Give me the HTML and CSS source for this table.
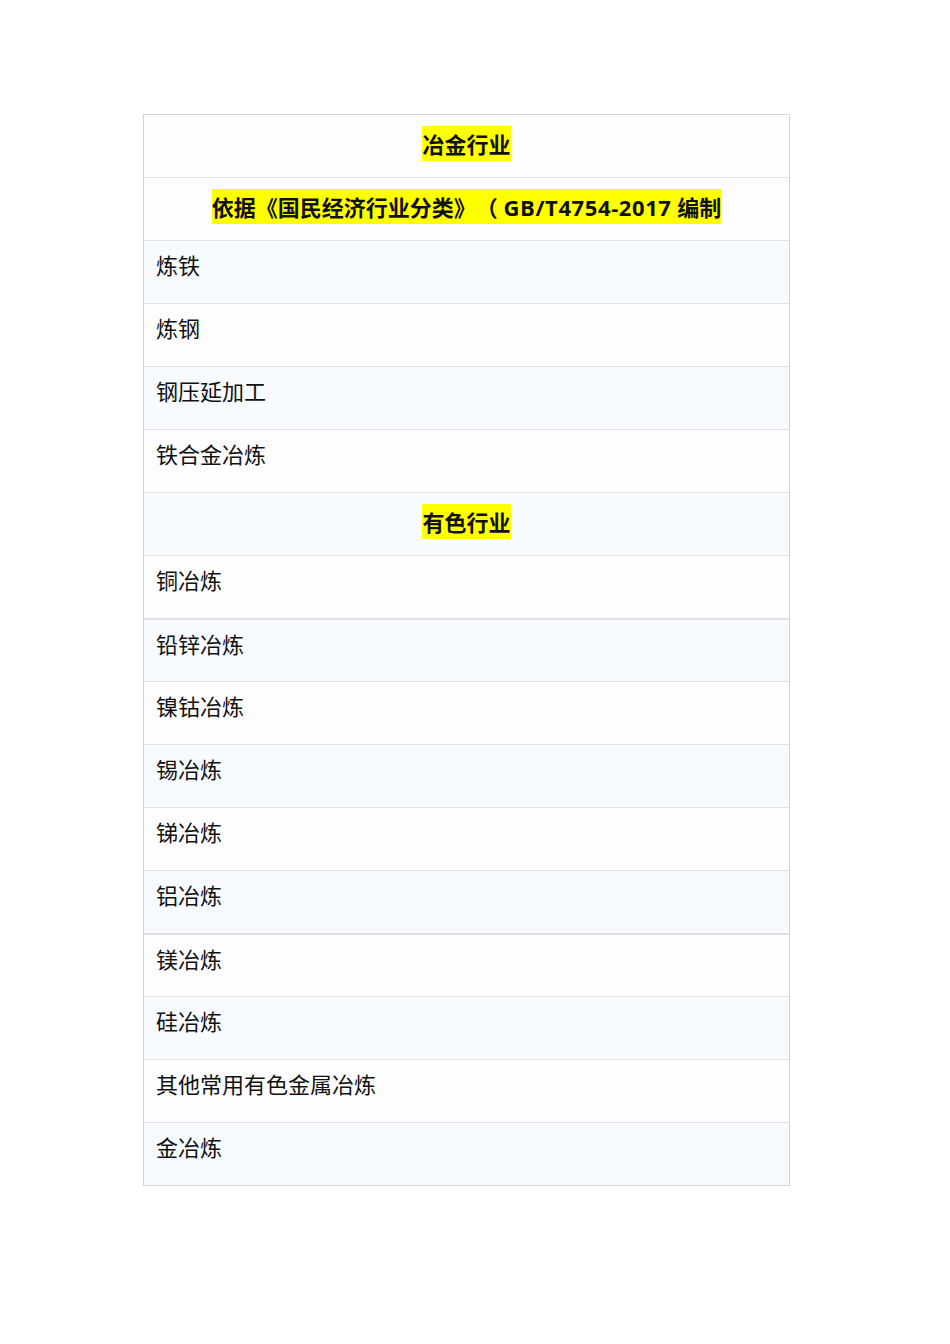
FILE: index.html
```html
<!DOCTYPE html>
<html lang="zh-CN">
<head>
<meta charset="utf-8">
<title>冶金行业</title>
<link rel="stylesheet" href="styles.css">
</head>
<body>
<div class="sheet">
  <div class="row head plain"><span class="mark">冶金行业</span></div>
  <div class="row head plain"><span class="mark">依据《国民经济行业分类》（ <span class="wide">GB/T4754-2017</span> 编制</span></div>
  <div class="row tint">炼铁</div>
  <div class="row plain">炼钢</div>
  <div class="row tint">钢压延加工</div>
  <div class="row plain">铁合金冶炼</div>
  <div class="row head tint"><span class="mark">有色行业</span></div>
  <div class="row plain">铜冶炼</div>
  <div class="row tint thick">铅锌冶炼</div>
  <div class="row plain">镍钴冶炼</div>
  <div class="row tint">锡冶炼</div>
  <div class="row plain">锑冶炼</div>
  <div class="row tint">铝冶炼</div>
  <div class="row plain thick">镁冶炼</div>
  <div class="row tint">硅冶炼</div>
  <div class="row plain">其他常用有色金属冶炼</div>
  <div class="row tint">金冶炼</div>
</div>
</body>
</html>
```
FILE: styles.css
```css
html, body {
  margin: 0;
  padding: 0;
  background: #ffffff;
}
body {
  font-family: "Open Sans", "Noto Sans CJK SC", sans-serif;
  color: #111111;
  text-spacing-trim: space-all;
}
.sheet {
  margin: 114px 0 0 143px;
  width: 645px;
  border: 1px solid #d4d4d4;
}
.row {
  box-sizing: border-box;
  height: 63px;
  border-top: 1px solid #e3e3e3;
  font-size: 22px;
  line-height: 32px;
  padding: 8px 12px 0;
}
.row:first-child {
  border-top: none;
  height: 62px;
}
.row.thick {
  border-top: 2px solid #e0e0e0;
}
.plain { background: #fdfdfd; }
.tint { background: #f7faff; }
.head {
  display: flex;
  align-items: center;
  justify-content: center;
  padding: 0 12px 5px;
  font-weight: bold;
}
.mark {
  background: #ffff00;
  padding: 2px 0 1px;
  line-height: 32px;
}
.wide {
  letter-spacing: 0.6px;
}
```
